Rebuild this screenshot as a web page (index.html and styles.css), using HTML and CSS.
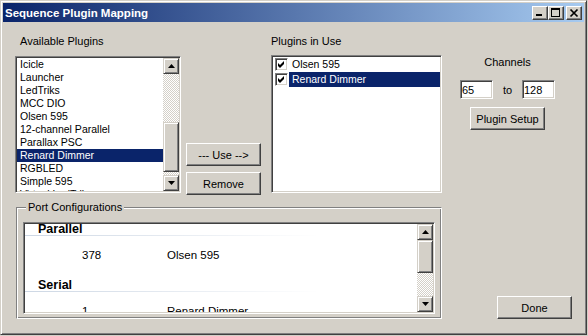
FILE: index.html
```html
<!DOCTYPE html>
<html lang="en">
<head>
    <meta charset="UTF-8">
    <title>Sequence Plugin Mapping</title>
    <link rel="stylesheet" href="styles.css">
</head>
<body>
    <div class="window">
        <div class="titlebar">
            <span class="title">Sequence Plugin Mapping</span>
            <div class="caption-buttons">
                <span class="caption-btn">
                    <svg width="12" height="10" viewBox="0 0 12 10"><rect x="2" y="6" width="6" height="2" fill="#000"/></svg>
                </span>
                <span class="caption-btn">
                    <svg width="12" height="10" viewBox="0 0 12 10"><path d="M1 0h9v9H1z M2 2v6h7V2z" fill="#000" fill-rule="evenodd"/></svg>
                </span>
                <span class="caption-btn close">
                    <svg width="12" height="10" viewBox="0 0 12 10"><path d="M2.5 1.5 L9.5 8.5 M9.5 1.5 L2.5 8.5" stroke="#000" stroke-width="1.7"/></svg>
                </span>
            </div>
        </div>

        <div class="client">
            <div class="top-row">
                <div class="col col-available">
                    <div class="field-label">Available Plugins</div>
                    <div class="listbox plugin-list">
                        <div class="items">
                            <div class="item">Icicle</div>
                            <div class="item">Launcher</div>
                            <div class="item">LedTriks</div>
                            <div class="item">MCC DIO</div>
                            <div class="item">Olsen 595</div>
                            <div class="item">12-channel Parallel</div>
                            <div class="item">Parallax PSC</div>
                            <div class="item selected">Renard Dimmer</div>
                            <div class="item">RGBLED</div>
                            <div class="item">Simple 595</div>
                            <div class="item">Virtual LedTriks</div>
                        </div>
                        <div class="scrollbar">
                            <div class="sb-btn">
                                <svg width="7" height="4" viewBox="0 0 7 4"><path d="M3.5 0 L7 4 L0 4 Z" fill="#000"/></svg>
                            </div>
                            <div class="sb-track" style="height: 48px"></div>
                            <div class="sb-thumb" style="height: 50px"></div>
                            <div class="sb-track fill"></div>
                            <div class="sb-btn">
                                <svg width="7" height="4" viewBox="0 0 7 4"><path d="M0 0 L7 0 L3.5 4 Z" fill="#000"/></svg>
                            </div>
                        </div>
                    </div>
                </div>

                <div class="col col-actions">
                    <button class="btn">--- Use --&gt;</button>
                    <button class="btn">Remove</button>
                </div>

                <div class="col col-inuse">
                    <div class="field-label">Plugins in Use</div>
                    <div class="listbox inuse-list">
                        <div class="check-item">
                            <span class="checkbox">
                                <svg width="9" height="9" viewBox="0 0 9 9"><path d="M1 3 L3 5 L7 1 L7 4 L3 8 L1 6 Z" fill="#000"/></svg>
                            </span>
                            <span class="check-label">Olsen 595</span>
                        </div>
                        <div class="check-item">
                            <span class="checkbox">
                                <svg width="9" height="9" viewBox="0 0 9 9"><path d="M1 3 L3 5 L7 1 L7 4 L3 8 L1 6 Z" fill="#000"/></svg>
                            </span>
                            <span class="check-label selected">Renard Dimmer</span>
                        </div>
                    </div>
                </div>

                <div class="col col-channels">
                    <div class="channels-label">Channels</div>
                    <div class="channel-range">
                        <input class="num" type="text" value="65" readonly>
                        <span>to</span>
                        <input class="num" type="text" value="128" readonly>
                    </div>
                    <button class="btn setup">Plugin Setup</button>
                </div>
            </div>

            <div class="bottom-row">
                <fieldset class="group">
                    <legend>Port Configurations</legend>
                    <div class="listbox port-list">
                        <div class="port-content">
                            <div class="group-head">Parallel</div>
                            <div class="group-line"></div>
                            <div class="port-row">
                                <span class="port-num">378</span>
                                <span>Olsen 595</span>
                            </div>
                            <div class="group-head">Serial</div>
                            <div class="group-line"></div>
                            <div class="port-row">
                                <span class="port-num">1</span>
                                <span>Renard Dimmer</span>
                            </div>
                        </div>
                        <div class="scrollbar">
                            <div class="sb-btn">
                                <svg width="7" height="4" viewBox="0 0 7 4"><path d="M3.5 0 L7 4 L0 4 Z" fill="#000"/></svg>
                            </div>
                            <div class="sb-thumb" style="height: 33px"></div>
                            <div class="sb-track fill"></div>
                            <div class="sb-btn">
                                <svg width="7" height="4" viewBox="0 0 7 4"><path d="M0 0 L7 0 L3.5 4 Z" fill="#000"/></svg>
                            </div>
                        </div>
                    </div>
                </fieldset>
                <button class="btn done">Done</button>
            </div>
        </div>
    </div>
</body>
</html>
```

FILE: styles.css
```css
body {
    margin: 0;
    background: #d4d0c8;
    font-family: "Liberation Sans", Arial, sans-serif;
    font-size: 11px;
    color: #000;
}
.window {
    width: 587px;
    height: 335px;
    box-sizing: border-box;
    border: 1px solid;
    border-color: #d4d0c8 #404040 #404040 #d4d0c8;
    box-shadow: inset 1px 1px #fff, inset -1px -1px #808080;
    padding: 2px;
    background: #d4d0c8;
    display: flex;
    flex-direction: column;
}
.titlebar {
    height: 19px;
    flex-shrink: 0;
    display: flex;
    align-items: center;
    padding-left: 2px;
    background: linear-gradient(to right, #0a246a, #a6caf0);
    color: #fff;
    font-weight: bold;
    font-size: 11.5px;
}
.title {
    flex: 1;
}
.caption-buttons {
    display: flex;
    margin-right: 2px;
}
.caption-btn {
    width: 16px;
    height: 14px;
    box-sizing: border-box;
    display: flex;
    align-items: center;
    justify-content: center;
    background: #d4d0c8;
    border: 1px solid;
    border-color: #fff #404040 #404040 #fff;
    box-shadow: inset -1px -1px #808080;
}
.caption-btn.close {
    margin-left: 2px;
}

.client {
    flex: 1;
    padding: 12px 0 0 12px;
}
.top-row {
    display: flex;
    height: 159px;
}
.col {
    display: flex;
    flex-direction: column;
}
.field-label {
    height: 14px;
    line-height: 14px;
    margin-bottom: 8px;
}
.col-available {
    width: 166px;
}
.col-available .field-label {
    padding-left: 5px;
}

/* sunken white boxes */
.listbox {
    box-sizing: border-box;
    background: #fff;
    border: 1px solid;
    border-color: #808080 #fff #fff #808080;
    box-shadow: inset 1px 1px #404040, inset -1px -1px #d4d0c8;
    padding: 1px;
}
.plugin-list {
    height: 137px;
    display: flex;
}
.items {
    flex: 1;
    overflow: hidden;
}
.item {
    height: 13px;
    line-height: 13px;
    padding-left: 3px;
    font-size: 10.5px;
    white-space: nowrap;
}
.item.selected, .check-label.selected {
    background: #0a246a;
    color: #fff;
}

.scrollbar {
    width: 16px;
    display: flex;
    flex-direction: column;
}
.sb-btn, .sb-thumb {
    box-sizing: border-box;
    background: #d4d0c8;
    border: 1px solid;
    border-color: #d4d0c8 #404040 #404040 #d4d0c8;
    box-shadow: inset 1px 1px #fff, inset -1px -1px #808080;
}
.sb-btn {
    height: 16px;
    display: flex;
    align-items: center;
    justify-content: center;
}
.sb-track {
    background: repeating-conic-gradient(#d4d0c8 0 25%, #fff 0 50%) 0 0 / 2px 2px;
}
.sb-track.fill {
    flex: 1;
}

.col-actions {
    width: 75px;
    margin-left: 5px;
    margin-bottom: -2px;
    justify-content: flex-end;
    gap: 6px;
}
.btn {
    width: 75px;
    height: 23px;
    box-sizing: border-box;
    padding: 0;
    background: #d4d0c8;
    border: 1px solid;
    border-color: #fff #404040 #404040 #fff;
    box-shadow: inset -1px -1px #808080;
    font-family: inherit;
    font-size: 11px;
    color: #000;
}

.col-inuse {
    width: 171px;
    margin-left: 10px;
}
.col-inuse .field-label {
    margin-bottom: 7px;
}
.inuse-list {
    height: 138px;
}
.check-item {
    height: 15px;
    display: flex;
    align-items: center;
    padding-left: 2px;
}
.checkbox {
    width: 13px;
    height: 13px;
    box-sizing: border-box;
    display: flex;
    align-items: center;
    justify-content: center;
    background: #fff;
    border: 1px solid;
    border-color: #808080 #fff #fff #808080;
    box-shadow: inset 1px 1px #404040, inset -1px -1px #d4d0c8;
}
.check-label {
    flex: 1;
    height: 15px;
    line-height: 15px;
    margin-left: 1px;
    padding-left: 3px;
    font-size: 10.5px;
}

.col-channels {
    width: 95px;
    margin-left: 18px;
    padding-top: 21px;
    align-items: center;
}
.channels-label {
    height: 14px;
    line-height: 14px;
}
.channel-range {
    width: 95px;
    height: 19px;
    margin-top: 11px;
    display: flex;
    align-items: center;
    justify-content: space-between;
}
.num {
    width: 33px;
    height: 19px;
    box-sizing: border-box;
    padding: 0 0 0 1px;
    background: #fff;
    border: 1px solid;
    border-color: #808080 #fff #fff #808080;
    box-shadow: inset 1px 1px #404040, inset -1px -1px #d4d0c8;
    font-family: inherit;
    font-size: 11px;
    outline: none;
}
.btn.setup {
    margin-top: 8px;
}

.bottom-row {
    display: flex;
    align-items: flex-end;
    margin-top: 7px;
}
.group {
    width: 426px;
    box-sizing: border-box;
    margin: 0 0 0 1px;
    padding: 8px 6px 4px 6px;
    border: 1px solid;
    border-color: #808080 #fff #fff #808080;
    box-shadow: inset 1px 1px #fff, inset -1px -1px #808080;
}
.group legend {
    height: 14px;
    line-height: 14px;
    padding: 0 2px;
    margin-left: 3px;
    background: #d4d0c8;
}
.port-list {
    width: 412px;
    height: 92px;
    display: flex;
}
.port-content {
    flex: 1;
    overflow: hidden;
}
.group-head {
    height: 11px;
    line-height: 11px;
    padding-left: 13px;
    font-size: 12.5px;
    font-weight: bold;
}
.group-line {
    height: 1px;
    background: linear-gradient(to right, #cdd7e4, #fff 75%);
}
.port-row {
    height: 44px;
    box-sizing: border-box;
    padding-top: 12px;
    line-height: 14px;
    font-size: 11.5px;
    display: flex;
}
.port-num {
    width: 85px;
    margin-left: 57px;
}
.btn.done {
    margin-left: 55px;
}
```
